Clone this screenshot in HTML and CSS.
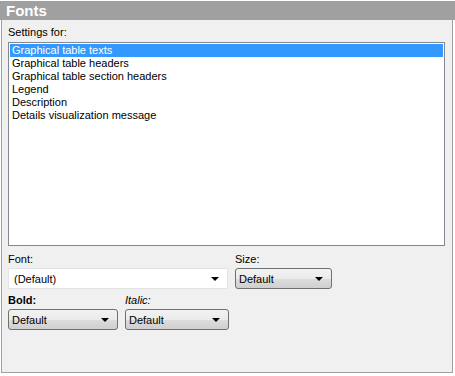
FILE: index.html
```html
<!DOCTYPE html>
<html lang="en">
<head>
<meta charset="UTF-8">
<title>Fonts</title>
<link rel="stylesheet" href="styles.css">
</head>
<body>

<div class="panel">
  <div class="title">Fonts</div>
  <div class="body">
    <div class="label">Settings for:</div>
    <ul class="list">
      <li class="selected">Graphical table texts</li>
      <li>Graphical table headers</li>
      <li>Graphical table section headers</li>
      <li>Legend</li>
      <li>Description</li>
      <li>Details visualization message</li>
    </ul>

    <div class="row">
      <div class="field font-field">
        <div class="label">Font:</div>
        <div class="combo edit"><span>(Default)</span><i class="arrow"></i></div>
      </div>
      <div class="field size-field">
        <div class="label">Size:</div>
        <div class="combo"><span>Default</span><i class="arrow"></i></div>
      </div>
    </div>

    <div class="row">
      <div class="field bold-field">
        <div class="label bold">Bold:</div>
        <div class="combo"><span>Default</span><i class="arrow"></i></div>
      </div>
      <div class="field italic-field">
        <div class="label italic">Italic:</div>
        <div class="combo"><span>Default</span><i class="arrow"></i></div>
      </div>
    </div>
  </div>
</div>

</body>
</html>
```

FILE: styles.css
```css
body {
  margin: 0;
  background: #fff;
  font-family: 'Liberation Sans', Arial, sans-serif;
  font-size: 11px;
  color: #000;
}

.panel {
  width: 455px;
  padding-top: 1px;
}

.title {
  height: 19px;
  background: #a0a0a0;
  color: #fff;
  font-weight: bold;
  font-size: 15px;
  line-height: 19px;
  padding-left: 6px;
}

.body {
  margin: 0 2px 0 1px;
  height: 353px;
  box-sizing: border-box;
  background: #f0f0f0;
  border: 1px solid #a0a0a0;
  border-top: none;
  padding: 6px 7px 0 6px;
}

.label {
  line-height: 13px;
  height: 13px;
}

.label.bold {
  font-weight: bold;
}

.label.italic {
  font-style: italic;
}

.list {
  list-style: none;
  margin: 3px 0 0;
  padding: 1px;
  height: 204px;
  box-sizing: border-box;
  background: #fff;
  border: 1px solid #828790;
}

.list li {
  height: 13px;
  line-height: 13px;
  padding-left: 2px;
}

.list li.selected {
  background: #3399ff;
  color: #fff;
}

.row {
  display: flex;
  gap: 7px;
}

.list + .row {
  margin-top: 7px;
}

.row + .row {
  margin-top: 5px;
}

.field .label {
  margin-bottom: 2px;
}

.font-field { width: 220px; }
.size-field { width: 97px; }
.bold-field { width: 110px; }
.italic-field { width: 104px; }

.combo {
  height: 21px;
  box-sizing: border-box;
  border: 1px solid #707070;
  border-radius: 3px;
  background: linear-gradient(#f2f2f2, #ebebeb 50%, #dddddd 51%, #cfcfcf);
  display: flex;
  align-items: center;
  padding: 0 8px 0 3px;
  justify-content: space-between;
}

.combo.edit {
  background: #fff;
  border: 1px solid #e3e3e3;
  border-radius: 0;
  padding-left: 5px;
}

.arrow {
  width: 0;
  height: 0;
  border-left: 4px solid transparent;
  border-right: 4px solid transparent;
  border-top: 4px solid #000;
}
```
